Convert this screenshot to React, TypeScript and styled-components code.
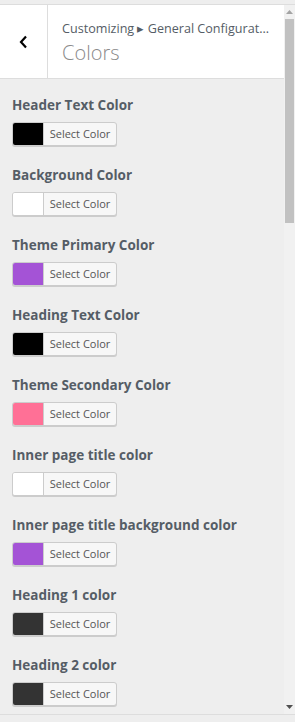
import React from 'react';
import styled, { createGlobalStyle } from 'styled-components';

const GlobalStyle = createGlobalStyle`
  html, body {
    margin: 0;
    padding: 0;
    background: #eeeeee;
    font-family: "Open Sans", "Noto Sans", "Liberation Sans", sans-serif;
  }
`;

const Page = styled.div`
  height: 722px;
  display: flex;
  flex-direction: column;
  overflow: hidden;
`;

const TopStrip = styled.div`
  height: 4px;
  border-bottom: 1px solid #dddddd;
  flex-shrink: 0;
`;

const Panel = styled.div`
  height: 709px;
  display: flex;
  border-bottom: 1px solid #dddddd;
  flex-shrink: 0;
`;

const MainCol = styled.div`
  flex: 1;
  display: flex;
  flex-direction: column;
  min-width: 0;
  overflow: hidden;
`;

const Header = styled.div`
  height: 73px;
  display: flex;
  background: #fff;
  border-bottom: 1px solid #dddddd;
  flex-shrink: 0;
`;

const BackBtn = styled.button`
  width: 48px;
  border: none;
  border-right: 1px solid #dddddd;
  background: #fff;
  display: flex;
  align-items: center;
  justify-content: center;
  padding: 0;
  cursor: pointer;
`;

const HeadText = styled.div`
  flex: 1;
  min-width: 0;
  padding: 15px 8px 0 14px;
`;

const Crumb = styled.div`
  font-size: 12.6px;
  line-height: 18px;
  color: #555d66;
  white-space: nowrap;
`;

const PanelTitle = styled.div`
  font-size: 20px;
  font-weight: 300;
  line-height: 26px;
  color: #8a8a8a;
  margin-top: 2px;
`;

const Content = styled.div`
  flex: 1;
  padding: 16px 12px 0;
  display: flex;
  flex-direction: column;
  gap: 19px;
`;

const Control = styled.div`
  display: flex;
  flex-direction: column;
  align-items: flex-start;
  gap: 6px;
`;

const Label = styled.span`
  font-size: 13.5px;
  font-weight: 700;
  line-height: 21px;
  color: #555d66;
`;

const ColorButton = styled.button`
  height: 24px;
  width: 105px;
  display: flex;
  padding: 0;
  border: 1px solid #cccccc;
  border-radius: 3px;
  background: #f7f7f7;
  box-shadow: 0 1px 0 #cccccc;
  overflow: hidden;
  cursor: pointer;
  font-family: inherit;
`;

const Swatch = styled.span<{ $color: string }>`
  width: 30px;
  height: 100%;
  background: ${p => p.$color};
  border-right: 1px solid #cccccc;
  flex-shrink: 0;
`;

const BtnText = styled.span`
  flex: 1;
  font-size: 11px;
  line-height: 22px;
  color: #555555;
  text-align: center;
`;

const Scrollbar = styled.div`
  width: 11px;
  flex-shrink: 0;
  background: #f1f1f1;
  display: flex;
  flex-direction: column;
  align-items: center;
`;

const Arrow = styled.div`
  height: 14px;
  display: flex;
  align-items: center;
  justify-content: center;
  flex-shrink: 0;
`;

const Thumb = styled.div`
  width: 9px;
  height: 204px;
  background: #c1c1c1;
`;

const Track = styled.div`
  flex: 1;
`;

const controls = [
  { label: 'Header Text Color', color: '#000000' },
  { label: 'Background Color', color: '#ffffff' },
  { label: 'Theme Primary Color', color: '#a453d6' },
  { label: 'Heading Text Color', color: '#000000' },
  { label: 'Theme Secondary Color', color: '#ff7096' },
  { label: 'Inner page title color', color: '#ffffff' },
  { label: 'Inner page title background color', color: '#a453d6' },
  { label: 'Heading 1 color', color: '#333333' },
  { label: 'Heading 2 color', color: '#333333' },
];

const App = () => {
  return (
    <Page>
      <GlobalStyle />
      <TopStrip />
      <Panel>
        <MainCol>
          <Header>
            <BackBtn aria-label="Back">
              <svg width="12" height="14" viewBox="0 0 12 14">
                <path d="M8 1.5 L3 7 L8 12.5" fill="none" stroke="#000" strokeWidth="2.2" />
              </svg>
            </BackBtn>
            <HeadText>
              <Crumb>Customizing ▸ General Configurat…</Crumb>
              <PanelTitle>Colors</PanelTitle>
            </HeadText>
          </Header>
          <Content>
            {controls.map(c => (
              <Control key={c.label}>
                <Label>{c.label}</Label>
                <ColorButton>
                  <Swatch $color={c.color} />
                  <BtnText>Select Color</BtnText>
                </ColorButton>
              </Control>
            ))}
          </Content>
        </MainCol>
        <Scrollbar>
          <Arrow>
            <svg width="7" height="4" viewBox="0 0 7 4"><path d="M0 4 L3.5 0 L7 4Z" fill="#a3a3a3" /></svg>
          </Arrow>
          <Thumb />
          <Track />
          <Arrow>
            <svg width="7" height="4" viewBox="0 0 7 4"><path d="M0 0 L3.5 4 L7 0Z" fill="#505050" /></svg>
          </Arrow>
        </Scrollbar>
      </Panel>
    </Page>
  );
};

export default App;
